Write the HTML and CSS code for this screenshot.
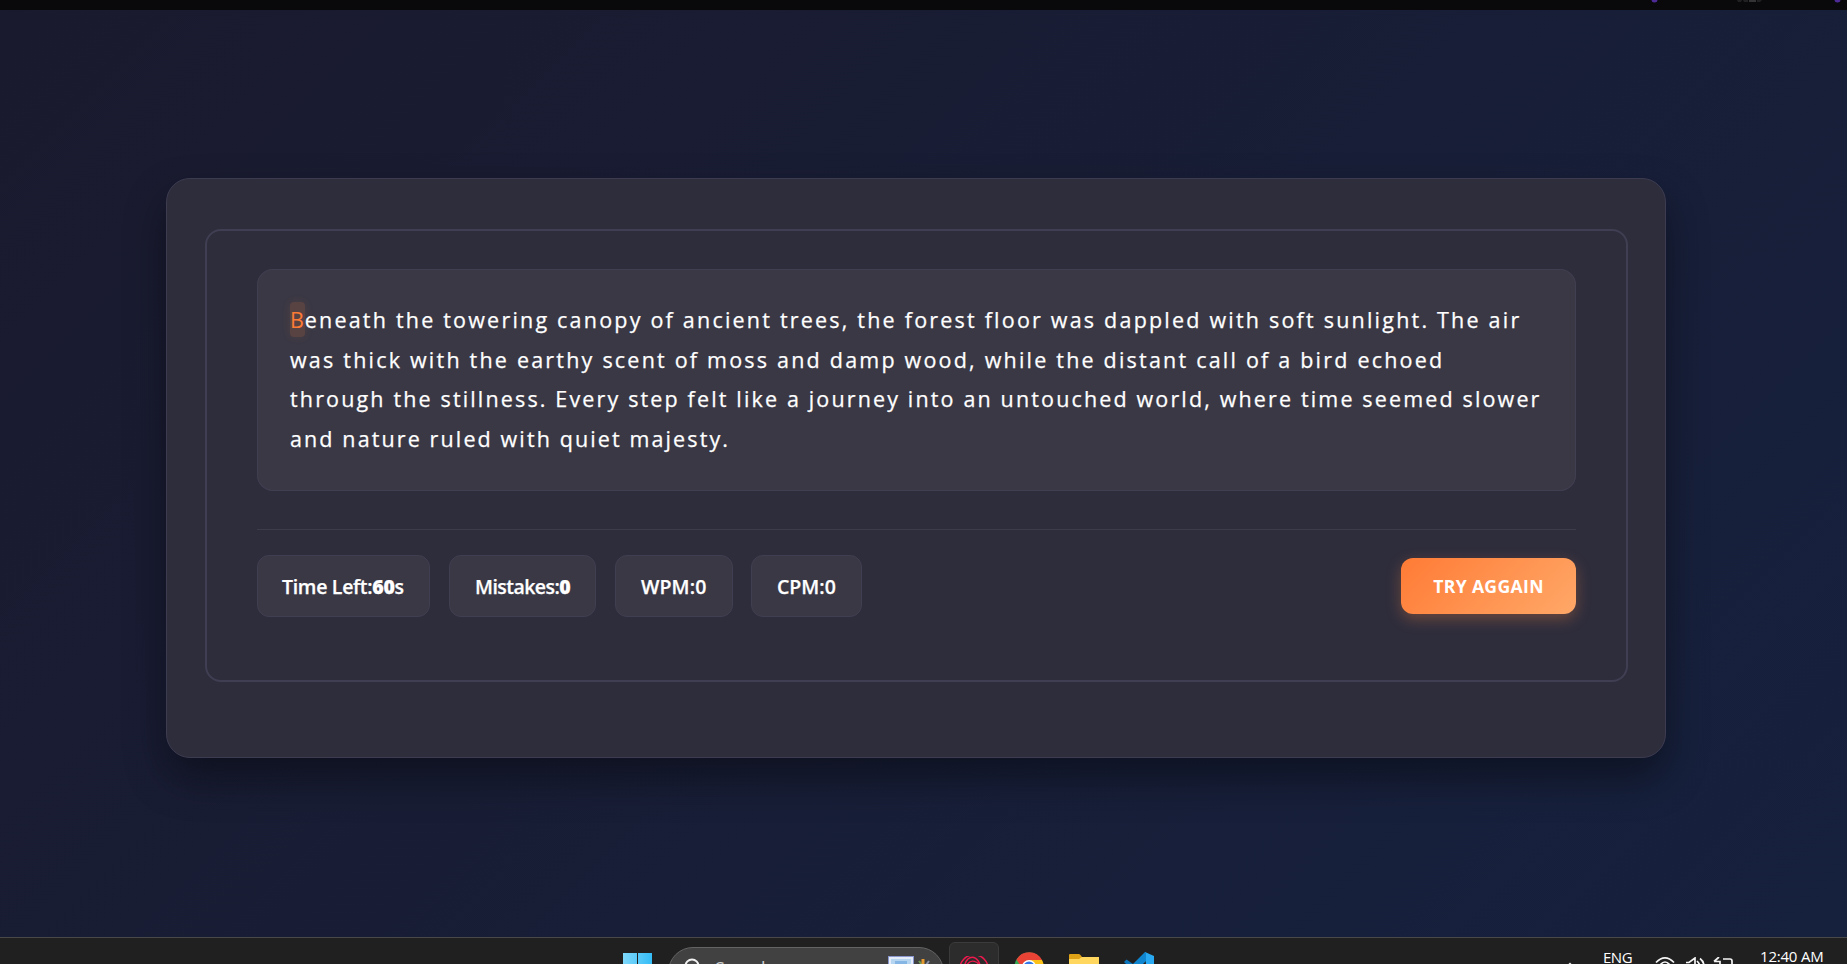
FILE: index.html
```html
<!DOCTYPE html>
<html lang="en">
<head>
<meta charset="utf-8">
<title>Typing Test</title>
<link rel="stylesheet" href="styles.css">
</head>
<body>
<div class="browser-edge">
  <svg class="edge-marks" width="247" height="10" viewBox="1600 0 247 10">
    <circle cx="1654.500" cy="-0.500" r="3" fill="#4d2a96"/><circle cx="1837.500" cy="-0.500" r="3" fill="#4d2a96"/>
    <path d="M1737 0h5l-1 2h-3zM1743 0h5v2h-4zM1757 0h5l-2 2h-3z" fill="#202022"/><path d="M1749 0h7v2h-7z" fill="#333335"/>
  </svg>
</div>
<main class="stage">
  <section class="card">
    <div class="content-box">
      <div class="typing-text">
        <p class="line l1"><span class="active">B</span>eneath the towering canopy of ancient trees, the forest floor was dappled with soft sunlight. The air</p>
        <p class="line l2">was thick with the earthy scent of moss and damp wood, while the distant call of a bird echoed</p>
        <p class="line l3">through the stillness. Every step felt like a journey into an untouched world, where time seemed slower</p>
        <p class="line l4">and nature ruled with quiet majesty.</p>
      </div>
      <div class="content">
        <ul class="stats">
          <li class="stat time"><span>Time Left:<b>60</b>s</span></li>
          <li class="stat mistakes"><span>Mistakes:<b>0</b></span></li>
          <li class="stat wpm"><span>WPM:0</span></li>
          <li class="stat cpm"><span>CPM:0</span></li>
        </ul>
        <button class="again">TRY AGGAIN</button>
      </div>
    </div>
  </section>
</main>
<footer class="taskbar">
  <div class="apps">
    <svg class="start" width="29" height="11" viewBox="0 0 29 11"><defs><linearGradient id="w" x1="0" x2="1"><stop offset="0" stop-color="#7fd8fb"/><stop offset="1" stop-color="#35bdf7"/></linearGradient></defs><path d="M0 0h14v11H0zM15 0h14v11H15z" fill="url(#w)"/></svg>
    <div class="search">
      <svg class="lens" width="18" height="18" viewBox="0 0 18 18"><circle cx="8" cy="8" r="6.500" fill="#49494a" stroke="#f2f2f2" stroke-width="2"/></svg>
      <span class="search-label">Search</span>
      <svg class="highlight" width="42" height="9" viewBox="0 0 42 9"><path d="M0 0h26v9H0z" fill="#8a97cf"/><path d="M1 1h24v8H1z" fill="#e3ecf8"/><path d="M3 3h20v6H3z" fill="#b5d5f1"/><path d="M7 5h12v4H7z" fill="#86b6e4"/><path d="M31 5l3 4" stroke="#6f9a52" stroke-width="2"/><path d="M41 5l-3 4" stroke="#8a93a8" stroke-width="2"/><path d="M35 3v6" stroke="#e49a2e" stroke-width="3"/></svg>
    </div>
    <div class="tile"><svg width="30" height="13" viewBox="0 0 30 13"><g fill="none" stroke="#f0194d"><path d="M.8 13A14.200 14.200 0 0 1 29.200 13" stroke-width="1.500"/><path d="M5 13C6 5 9.500 1.200 13.500 1.200S21 6 22 13" stroke-width="1.400"/><path d="M8.500 8C11 5 14 4.500 17 6S21 10 22 13" stroke-width="1.300"/></g></svg></div>
    <svg class="chrome" width="30" height="13" viewBox="0 0 30 13"><circle cx="15" cy="15" r="14.500" fill="#36a852"/><path d="M2.500 7.500A14.500 14.500 0 0 1 28 8H15L9 18z" fill="#e94335"/><path d="M15 8h13q2 4 2 8H15z" fill="#fbc116"/><circle cx="15" cy="15" r="7" fill="#fff"/><circle cx="15" cy="15" r="5.500" fill="#3478ea"/></svg>
    <svg class="folder" width="30" height="11" viewBox="0 0 30 11"><path d="M0 1q0-1 1-1h9q1 0 3 3h16q1 0 1 1v7H0z" fill="#dfa116"/><path d="M0 5h10l3-2h17v8H0z" fill="#ffd75e"/></svg>
    <svg class="code" width="30" height="13" viewBox="0 0 30 13"><path d="M21 0l9 4v9h-8z" fill="#29a9f1"/><path d="M21 0l1 .500V9l-4 4H8z" fill="#0f86cf"/><path d="M0 10l2.500-2.500L9 12l-1 1H3z" fill="#0b76be"/></svg>
  </div>
  <div class="tray">
    <svg class="chevron" width="8" height="3" viewBox="0 0 8 3"><path d="M1.500 4L4 1.500 6.500 4" fill="none" stroke="#eee" stroke-width="1.500"/></svg>
    <span class="lang">ENG</span>
    <svg class="status" width="80" height="8" viewBox="0 0 80 8"><g fill="none" stroke="#f5f5f5" stroke-width="1.700"><path d="M1 5.500q9-9 18 0M5 8q5-6 10 0"/><path d="M31 5.500h3l6-4.500v8M42 4q3 3 3 6M45 1.500q4 3 4 8"/><path d="M68 2h7q2 0 2 2v5M59 4.500L64 0M59 4.500h6v4"/></g></svg>
    <span class="clock">12:40 AM</span>
  </div>
</footer>
</body>
</html>
```

FILE: styles.css
```css
* { box-sizing: border-box; margin: 0; padding: 0; }
body {
  width: 1847px;
  height: 964px;
  overflow: hidden;
  display: flex;
  flex-direction: column;
  font-family: "Open Sans", "Noto Sans", sans-serif;
  color: #fff;
  background: #1a1a2e;
}
.browser-edge { height: 10px; background: #09090b; display: flex; justify-content: flex-end; flex: none; }
.stage {
  height: 927px;
  flex: none;
  padding: 168px 0 0 166px;
  background: linear-gradient(135deg, #1a1a2e 0%, #16213e 100%);
}
.card {
  width: 1500px;
  height: 580px;
  padding: 50px 37px 0 38px;
  border: 1px solid #3d3b50;
  border-radius: 24px;
  background: #2e2d3c;
  box-shadow: 0 20px 40px rgba(0, 0, 0, 0.4);
}
.content-box {
  height: 453px;
  padding: 38px 50px 0;
  border: 2px solid #403e52;
  border-radius: 16px;
}
.typing-text {
  height: 222px;
  padding: 31px 32px 0 33px;
  border-radius: 16px;
  background: #3a3845;
  box-shadow: inset 0 0 0 1px #403e51;
}
.line { font-size: 21.5px; line-height: 39.7px; white-space: nowrap; -webkit-text-stroke: 0.25px currentColor; }
.l1 { letter-spacing: 2.21px; }
.l2 { letter-spacing: 2.21px; }
.l3 { letter-spacing: 2.15px; }
.l4 { letter-spacing: 2.12px; }
.active {
  color: #ff7b35;
  letter-spacing: 0.8px;
  padding: 3px 0;
  border-radius: 4px;
  background: rgba(255, 123, 53, 0.16);
  box-shadow: 0 0 10px rgba(255, 123, 53, 0.1);
  -webkit-text-stroke: 0;
}
.content {
  display: flex;
  justify-content: space-between;
  align-items: center;
  margin-top: 38px;
  padding-top: 25px;
  border-top: 1px solid #3d3b4c;
}
.stats { display: flex; list-style: none; }
.stat {
  height: 62px;
  padding-left: 24px;
  border: 1px solid #403e51;
  border-radius: 12px;
  background: #3a3845;
  font-size: 19.5px;
  font-weight: 600;
  line-height: 61px;
  white-space: nowrap;
  letter-spacing: -0.3px;
  -webkit-text-stroke: 0.25px currentColor;
}
.time { width: 173px; margin-right: 19px; }
.mistakes { width: 147px; margin-right: 19px; padding-left: 25px; letter-spacing: -0.55px; }
.wpm { width: 118px; margin-right: 18px; padding-left: 25px; letter-spacing: 0.1px; }
.cpm { width: 111px; padding-left: 25px; letter-spacing: 0; }
.again {
  width: 175px;
  height: 56px;
  border: 0;
  border-radius: 12px;
  background: linear-gradient(135deg, #ff7b35, #ffa868);
  box-shadow: 0 5px 15px rgba(255, 140, 70, 0.3);
  color: #fff;
  font: 700 17.6px "Open Sans", sans-serif;
  letter-spacing: 0.35px;
}
.taskbar {
  height: 27px;
  flex: none;
  display: flex;
  justify-content: space-between;
  border-top: 1px solid #49494a;
  background: #202020;
  overflow: hidden;
}
.apps { display: flex; align-items: flex-start; padding-left: 623px; }
.start { margin-top: 15px; }
.search {
  display: flex;
  width: 276px;
  height: 50px;
  margin: 9px 5px 0 16px;
  padding-left: 15px;
  border: 1px solid #646465;
  border-radius: 25px;
  background: #414142;
}
.lens { margin-top: 10px; flex: none; }
.search-label { width: 173px; margin-left: 13px; font-size: 18px; line-height: 24px; padding-top: 8px; color: #d0d0d0; }
.highlight { margin-top: 8px; flex: none; }
.tile { width: 50px; height: 50px; margin-top: 4px; padding: 9px 0 0 9px; border: 1px solid #3b3b3c; border-radius: 6px; background: #2c2c2d; }
.chrome { margin: 14px 0 0 15px; }
.folder { margin: 16px 0 0 25px; }
.code { margin: 14px 0 0 25px; }
.tray { display: flex; align-items: flex-start; padding-right: 22px; }
.chevron { margin: 24px 29px 0 0; }
.lang { margin-top: 9px; font-size: 15px; line-height: 20px; width: 52px; letter-spacing: -0.5px; }
.status { margin-top: 19px; }
.clock { margin: 8px 0 0 25px; font-size: 15px; line-height: 20px; width: 65px; letter-spacing: -0.2px; white-space: nowrap; }
```
